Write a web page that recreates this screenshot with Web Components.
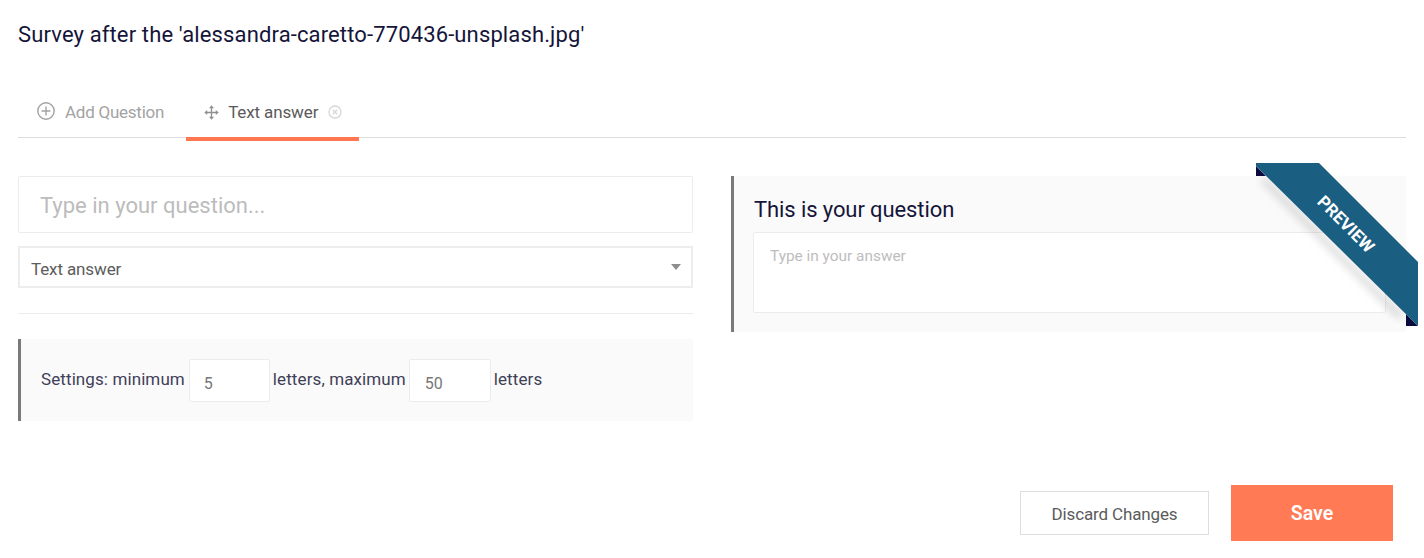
<!DOCTYPE html>
<html>
<head>
<meta charset="utf-8">
<title>Survey</title>
<style>
html, body { margin: 0; background: #fff; }
body { font-family: Roboto, "Liberation Sans", sans-serif; overflow: hidden; }
</style>
</head>
<body>
<survey-page>
  <survey-tabs slot="tabs">
    <tab-item>
      <svg slot="icon" class="add" width="18" height="18" viewBox="0 0 18 18" fill="none" stroke="#a3a3a3" stroke-width="1.4" style="margin-bottom:3px"><circle cx="9" cy="9" r="8.2"/><path d="M9 4.6v8.8M4.6 9h8.8"/></svg>
      Add Question
    </tab-item>
    <tab-item active closable>
      <svg slot="icon" width="15" height="15" viewBox="0 0 15 15" fill="none" stroke="#8f8f8f" stroke-width="1.3"><path d="M7.5 2v11M2 7.5h11"/><path d="M5 3.2 7.5.3 10 3.2zM5 11.8l2.5 2.9 2.5-2.9zM3.2 5 .3 7.5 3.2 10zM11.8 5l2.9 2.5-2.9 2.5z" fill="#8f8f8f" stroke="none"/></svg>
      Text answer
    </tab-item>
  </survey-tabs>
  <question-form slot="left"></question-form>
  <preview-card slot="right"></preview-card>
  <form-actions slot="actions"></form-actions>
</survey-page>

<script>
class SurveyPage extends HTMLElement {
  constructor () {
    super()
    this.attachShadow({ mode: 'open' }).innerHTML = `
<style>
:host { display: block; height: 558px; padding: 0 18px; box-sizing: border-box; }
h1 {
  margin: 0; padding-top: 20px; height: 91px; box-sizing: border-box;
  font-size: 22px; line-height: 30px; font-weight: 400; color: #15153a; letter-spacing: 0.13px;
}
.cols { display: grid; grid-template-columns: 675px 675px; column-gap: 38px; margin-top: 38px; height: 309px; }
.actions { display: flex; justify-content: flex-end; padding-right: 13px; }
</style>
<h1>Survey after the 'alessandra-caretto-770436-unsplash.jpg'</h1>
<slot name="tabs"></slot>
<div class="cols"><slot name="left"></slot><slot name="right"></slot></div>
<div class="actions"><slot name="actions"></slot></div>
`
  }
}

class SurveyTabs extends HTMLElement {
  constructor () {
    super()
    this.attachShadow({ mode: 'open' }).innerHTML = `
<style>
:host { display: flex; height: 47px; box-sizing: border-box; border-bottom: 1px solid #dedede; }
</style>
<slot></slot>
`
  }
}

class TabItem extends HTMLElement {
  constructor () {
    super()
    this.attachShadow({ mode: 'open' }).innerHTML = `
<style>
:host {
  display: flex; align-items: center; height: 50px; box-sizing: border-box;
  padding: 0 22px 4px 19px; font-size: 17px; letter-spacing: -0.25px; color: #a3a3a3; white-space: nowrap;
  border-bottom: 4px solid transparent;
}
:host ::slotted(svg) { margin-right: 10px; }
:host([active]) { color: #5a5a5a; padding: 0 17px 4px 18px; border-bottom-color: #ff7650; letter-spacing: -0.12px; }
:host([active]) ::slotted(svg) { margin-right: 9px; }
.close { display: none; margin-left: 10px; }
:host([closable]) .close { display: block; }
</style>
<slot name="icon"></slot><span><slot></slot></span>
<svg class="close" width="14" height="14" viewBox="0 0 14 14" fill="none" stroke="#d6d6d6" stroke-width="1.3"><circle cx="7" cy="7" r="6"/><path d="M4.8 4.8l4.4 4.4M9.2 4.8l-4.4 4.4"/></svg>
`
  }
}

class TextBox extends HTMLElement {
  constructor () {
    super()
    this.attachShadow({ mode: 'open' }).innerHTML = `
<style>
:host {
  display: block; box-sizing: border-box; background: #fff; border: 1px solid #ececec; border-radius: 2px;
  font-size: var(--box-size, 16px); color: var(--box-color, #bdbdbd);
}
</style>
<slot></slot>
`
  }
}

class SelectBox extends HTMLElement {
  constructor () {
    super()
    this.attachShadow({ mode: 'open' }).innerHTML = `
<style>
:host {
  display: flex; align-items: center; justify-content: space-between; box-sizing: border-box; height: 42px;
  padding: 0 10px 0 11px; background: #fff; border: 2px solid #ededed; font-size: 17px; letter-spacing: -0.12px; color: #5c5c5c;
}
span { padding-top: 3px; }
i { width: 0; height: 0; border: 5px solid transparent; border-top: 6px solid #8d8d8d; border-bottom: 0; }
</style>
<span><slot></slot></span><i></i>
`
  }
}

class QuestionForm extends HTMLElement {
  constructor () {
    super()
    this.attachShadow({ mode: 'open' }).innerHTML = `
<style>
:host { display: block; }
.question { height: 57px; padding: 2px 21px 0; display: flex; align-items: center; --box-size: 22px; --box-color: #bcbcbc; }
select-box { margin-top: 13px; }
hr { border: 0; border-top: 1px solid #ececec; margin: 25px 0; }
.settings {
  display: flex; align-items: center; height: 82px; box-sizing: border-box; padding: 0 20px 2px;
  background: #fafafa; border-left: 3px solid #7a7a7a; font-size: 17px; letter-spacing: 0.1px; color: #3f3f58; white-space: pre;
}
.num { height: 43px; margin: 3px 3px 0 4px; padding: 5px 15px 0; display: flex; align-items: center; letter-spacing: 0; --box-size: 16px; --box-color: #777; }
.a { width: 81px; padding-left: 14px; }
.b { width: 82px; margin-left: 3px; }
</style>
<text-box class="question">Type in your question...</text-box>
<select-box>Text answer</select-box>
<hr>
<div class="settings">
  <span>Settings: minimum</span>
  <text-box class="num a">5</text-box>
  <span>letters, maximum</span>
  <text-box class="num b">50</text-box>
  <span>letters</span>
</div>
`
  }
}

class PreviewRibbon extends HTMLElement {
  constructor () {
    super()
    this.attachShadow({ mode: 'open' }).innerHTML = `
<style>
:host { position: absolute; left: 522px; top: -13px; width: 162px; height: 163px; display: block; pointer-events: none; }
svg { position: absolute; inset: 0; overflow: visible; }
span {
  position: absolute; left: 45px; top: 51px; width: 90px; text-align: center; transform: rotate(45deg);
  font-size: 17px; line-height: 20px; font-weight: 700; color: #fff;
}
</style>
<svg width="162" height="163" viewBox="0 0 162 163">
  <defs>
    <filter id="s" x="-20%" y="-20%" width="140%" height="140%"><feGaussianBlur stdDeviation="4"/></filter>
    <clipPath id="c"><rect x="0" y="13" width="150" height="156"/></clipPath>
  </defs>
  <g clip-path="url(#c)"><path d="M10 14 148 152 142 156 4 18z" fill="#000" opacity=".14" filter="url(#s)"/></g>
  <path d="M0 3v10h10zM150 151l12 12h-12z" fill="#0a0a3c"/>
  <path d="M0 0H63L162 99V163L0 3z" fill="#1a5e82"/>
</svg>
<span><slot></slot></span>
`
  }
}

class PreviewCard extends HTMLElement {
  constructor () {
    super()
    this.attachShadow({ mode: 'open' }).innerHTML = `
<style>
:host {
  display: block; position: relative; height: 156px; box-sizing: border-box; padding: 18px 20px 19px 19px;
  background: #fafafa; border-left: 3px solid #7a7a7a;
}
h2 { margin: 0 0 0 1px; height: 38px; padding-top: 1px; box-sizing: border-box; font-size: 22px; line-height: 30px; font-weight: 400; letter-spacing: -0.1px; color: #15153a; }
.answer { height: 81px; padding: 13px 16px; line-height: 20px; --box-size: 15.4px; --box-color: #bdbdbd; }
</style>
<h2>This is your question</h2>
<text-box class="answer">Type in your answer</text-box>
<preview-ribbon>PREVIEW</preview-ribbon>
`
  }
}

class ActionButton extends HTMLElement {
  constructor () {
    super()
    this.attachShadow({ mode: 'open' }).innerHTML = `
<style>
:host {
  display: flex; align-items: center; justify-content: center; box-sizing: border-box;
  width: 189px; height: 44px; padding-top: 2px; background: #fff; border: 1px solid #dedede; color: #5b5b5b; font-size: 17px; letter-spacing: -0.15px;
}
:host([primary]) { width: 162px; height: 56px; padding: 0; background: #ff7a55; border: 0; color: #fff; font-size: 19.5px; font-weight: 600; letter-spacing: 0; }
</style>
<slot></slot>
`
  }
}

class FormActions extends HTMLElement {
  constructor () {
    super()
    this.attachShadow({ mode: 'open' }).innerHTML = `
<style>
:host { display: flex; align-items: center; gap: 22px; }
</style>
<action-button>Discard Changes</action-button>
<action-button primary>Save</action-button>
`
  }
}

customElements.define('survey-page', SurveyPage)
customElements.define('survey-tabs', SurveyTabs)
customElements.define('tab-item', TabItem)
customElements.define('text-box', TextBox)
customElements.define('select-box', SelectBox)
customElements.define('question-form', QuestionForm)
customElements.define('preview-ribbon', PreviewRibbon)
customElements.define('preview-card', PreviewCard)
customElements.define('action-button', ActionButton)
customElements.define('form-actions', FormActions)
</script>
</body>
</html>
